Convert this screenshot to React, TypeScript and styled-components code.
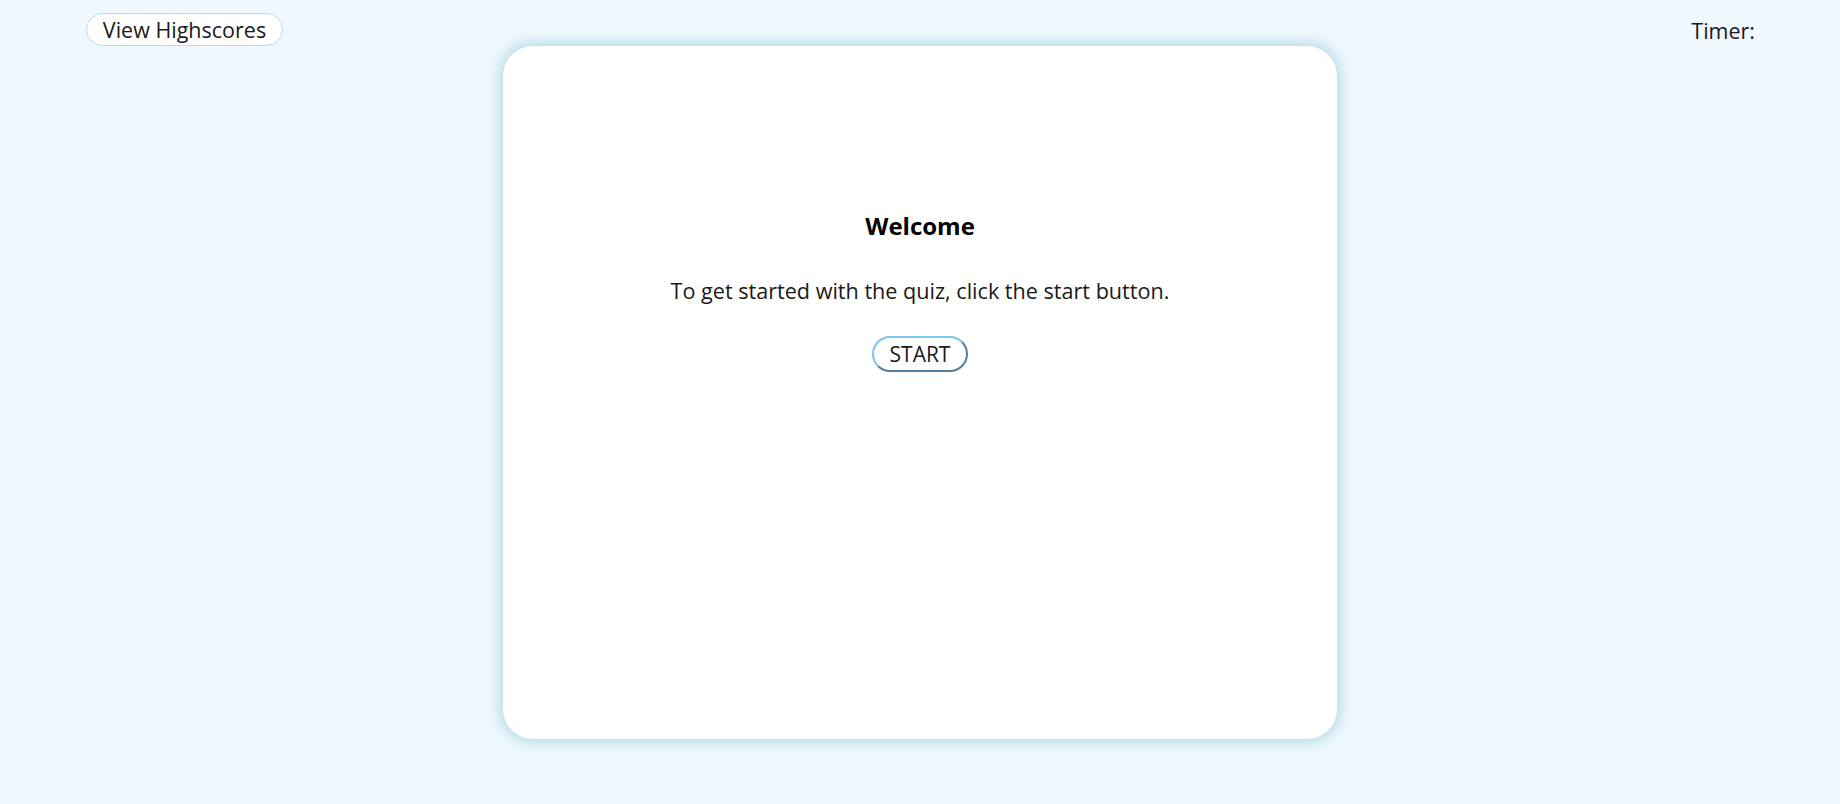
import React from 'react';
import styled, { createGlobalStyle } from 'styled-components';

const GlobalStyle = createGlobalStyle`
    html, body {
        margin: 0;
        padding: 0;
        background: aliceblue;
        font-family: 'Open Sans', 'Noto Sans', sans-serif;
        color: #1a1a1a;
    }
`;

const Page = styled.div`
    width: 1840px;
    height: 804px;
    display: flex;
    flex-direction: column;
    align-items: center;
`;

const Header = styled.header`
    width: 100%;
    height: 46px;
    display: flex;
    justify-content: space-between;
    align-items: flex-start;
    padding: 13px 85px 0 86px;
    box-sizing: border-box;
`;

const HighscoresButton = styled.button`
    height: 33px;
    width: 197px;
    padding: 0;
    background: white;
    border: 1px solid #b6dde9;
    border-radius: 17px;
    font-family: inherit;
    font-size: 21.5px;
    color: #1a1a1a;
`;

const Timer = styled.span`
    font-size: 21.5px;
    line-height: 33px;
    padding-top: 1px;
`;

const Card = styled.main`
    width: 834px;
    height: 693px;
    background: white;
    border-radius: 30px;
    box-shadow: 0 0 14px 4px #b8dbe6;
    display: flex;
    flex-direction: column;
    align-items: center;
    padding-top: 163px;
    box-sizing: border-box;
`;

const Title = styled.h1`
    margin: 0;
    font-size: 24px;
    font-weight: 700;
    color: #000;
`;

const Intro = styled.p`
    margin: 34px 0 0;
    font-size: 21.6px;
`;

const StartButton = styled.button`
    margin-top: 31px;
    width: 96px;
    height: 36px;
    padding: 0;
    background: white;
    border: 2px outset #7cc6f0;
    border-radius: 18px;
    font-family: inherit;
    font-size: 21px;
    color: #1a1a1a;
`;

export default function App() {
    return (
        <Page>
            <GlobalStyle />
            <Header>
                <HighscoresButton>View Highscores</HighscoresButton>
                <Timer>Timer:</Timer>
            </Header>
            <Card>
                <Title>Welcome</Title>
                <Intro>To get started with the quiz, click the start button.</Intro>
                <StartButton>START</StartButton>
            </Card>
        </Page>
    );
}
